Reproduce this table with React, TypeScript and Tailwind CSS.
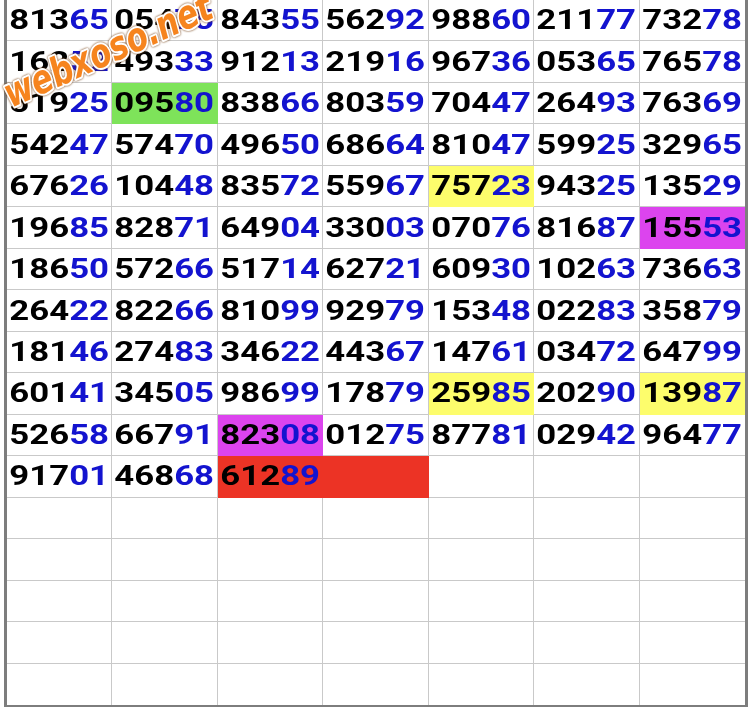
import React from "react"

const rows: string[][] = [
  ["81365", "05475", "84355", "56292", "98860", "21177", "73278"],
  ["16252", "49333", "91213", "21916", "96736", "05365", "76578"],
  ["51925", "09580", "83866", "80359", "70447", "26493", "76369"],
  ["54247", "57470", "49650", "68664", "81047", "59925", "32965"],
  ["67626", "10448", "83572", "55967", "75723", "94325", "13529"],
  ["19685", "82871", "64904", "33003", "07076", "81687", "15553"],
  ["18650", "57266", "51714", "62721", "60930", "10263", "73663"],
  ["26422", "82266", "81099", "92979", "15348", "02283", "35879"],
  ["18146", "27483", "34622", "44367", "14761", "03472", "64799"],
  ["60141", "34505", "98699", "17879", "25985", "20290", "13987"],
  ["52658", "66791", "82308", "01275", "87781", "02942", "96477"],
  ["91701", "46868", "61289", "", "", "", ""],
  ["", "", "", "", "", "", ""],
  ["", "", "", "", "", "", ""],
  ["", "", "", "", "", "", ""],
  ["", "", "", "", "", "", ""],
  ["", "", "", "", "", "", ""],
]

// highlighted cells, "row-col"
const highlight: Record<string, string> = {
  "2-1": "bg-[#7ee35a] border-[#7ee35a]",
  "4-4": "bg-[#fdfd6c] border-[#fdfd6c]",
  "5-6": "bg-[#dc44ee] border-[#dc44ee]",
  "9-4": "bg-[#fdfd6c] border-[#fdfd6c]",
  "9-6": "bg-[#fdfd6c] border-[#fdfd6c]",
  "10-2": "bg-[#dc44ee] border-[#dc44ee]",
  "11-2": "bg-[#ec3325] border-[#ec3325]",
  "11-3": "bg-[#ec3325] border-[#ec3325]",
}

function Cell({ value, r, c }: { value: string; r: number; c: number }) {
  const hl = highlight[`${r}-${c}`]
  return (
    <div
      className={[
        "flex items-center justify-center",
        c < 6 ? "border-r" : "",
        r < 16 ? "border-b" : "",
        hl ?? "border-[#c9c9c9] bg-white",
      ].join(" ")}
    >
      {value && (
        <span className="inline-block scale-x-[1.24] font-['Roboto',sans-serif] text-[28px] font-bold leading-none text-black">
          {value.slice(0, 3)}
          <span className="text-[#1313cf]">{value.slice(3)}</span>
        </span>
      )}
    </div>
  )
}

export default function App() {
  return (
    <div className="h-[707px] w-[750px] bg-white">
      <div className="relative ml-[4px] h-[707px] w-[744px] border-x-[3px] border-b-[2px] border-[#7d7d7d]">
        <div className="grid h-full grid-cols-7 grid-rows-[repeat(17,minmax(0,1fr))]">
          {rows.map((row, r) =>
            row.map((v, c) => <Cell key={`${r}-${c}`} value={v} r={r} c={c} />)
          )}
        </div>

        {/* watermark */}
        <svg className="pointer-events-none absolute -left-[4px] top-0 h-[130px] w-[250px] drop-shadow-[0_0_1px_#6b3405]">
          <text
            x="0"
            y="0"
            transform="translate(8 108) rotate(-24) scale(0.78 1)"
            fontFamily="DejaVu Sans, sans-serif"
            fontWeight="bold"
            fontStyle="italic"
            fontSize="40"
            fill="#f6841e"
            stroke="#ffffff"
            strokeWidth="4"
            strokeLinejoin="round"
            paintOrder="stroke"
          >
            webxoso.net
          </text>
        </svg>
      </div>
    </div>
  )
}
